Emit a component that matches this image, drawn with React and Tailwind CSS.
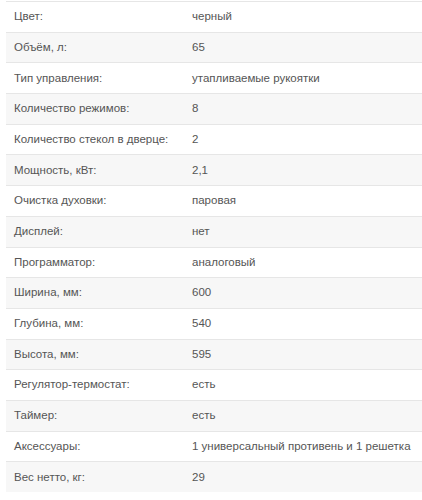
import React from "react";

const rows = [
  ["Цвет:", "черный"],
  ["Объём, л:", "65"],
  ["Тип управления:", "утапливаемые рукоятки"],
  ["Количество режимов:", "8"],
  ["Количество стекол в дверце:", "2"],
  ["Мощность, кВт:", "2,1"],
  ["Очистка духовки:", "паровая"],
  ["Дисплей:", "нет"],
  ["Программатор:", "аналоговый"],
  ["Ширина, мм:", "600"],
  ["Глубина, мм:", "540"],
  ["Высота, мм:", "595"],
  ["Регулятор-термостат:", "есть"],
  ["Таймер:", "есть"],
  ["Аксессуары:", "1 универсальный противень и 1 решетка"],
  ["Вес нетто, кг:", "29"],
];

export default function App() {
  return (
    <div className="w-[422px] h-[500px] bg-white overflow-hidden pt-px pl-[6px]" style={{ fontFamily: '"Liberation Sans", Arial, sans-serif' }}>
      <div className="flex flex-col">
        {rows.map(([k, v], i) => (
          <div
            key={i}
            className={`flex h-[30.7px] items-center border-t border-[#e6e6e6] text-[11.5px] text-[#555555] ${i % 2 === 1 ? "bg-[#f7f7f7]" : "bg-white"}`}
          >
            <div className="w-[178px] pl-[8px] shrink-0">{k}</div>
            <div className="pl-[8px] whitespace-nowrap">{v}</div>
          </div>
        ))}
      </div>
    </div>
  );
}
